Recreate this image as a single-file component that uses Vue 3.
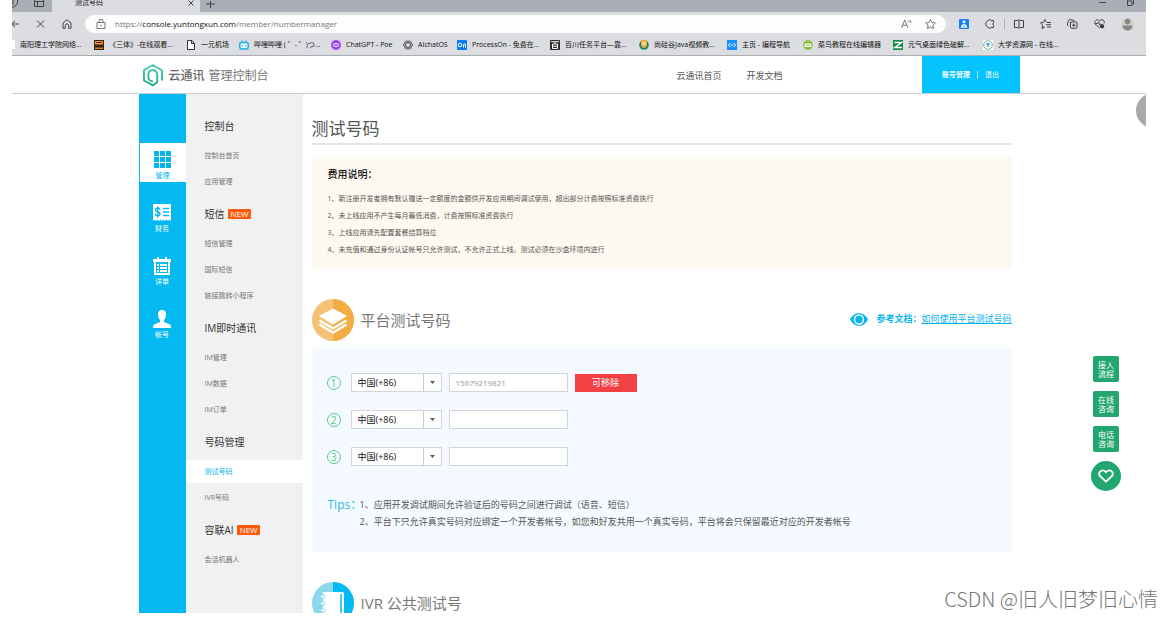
<script setup>
import { ref } from 'vue'

const url = 'https://'
const bookmarks = [
  { icon: 'none', text: '南阳理工学院网络...' },
  { icon: 'film', text: '《三体》-在线观看...' },
  { icon: 'page', text: '一元机场' },
  { icon: 'tv', text: '哔哩哔哩 ( ゜- ゜)つ...' },
  { icon: 'poe', text: 'ChatGPT - Poe' },
  { icon: 'ai', text: 'AIchatOS' },
  { icon: 'on', text: 'ProcessOn - 免费在...' },
  { icon: 'bai', text: '百川任务平台—靠...' },
  { icon: 'u', text: '尚硅谷Java视频教...' },
  { icon: 'code', text: '主页 - 编程导航' },
  { icon: 'bird', text: '菜鸟教程在线编辑器' },
  { icon: 'z', text: '元气桌面绿色破解...' },
  { icon: 'uni', text: '大学资源网 - 在线...' },
]

const rail = [
  { icon: 'grid', text: '管理', active: true },
  { icon: 'bill', text: '财务' },
  { icon: 'list', text: '详单' },
  { icon: 'user', text: '帐号' },
]

const groups = [
  { title: '控制台', items: ['控制台首页', '应用管理'] },
  { title: '短信', isNew: true, items: ['短信管理', '国际短信', '链接跳转小程序'] },
  { title: 'IM即时通讯', items: ['IM管理', 'IM数据', 'IM订单'] },
  { title: '号码管理', items: ['测试号码', 'IVR号码'] },
  { title: '容联AI', isNew: true, items: ['会话机器人'] },
]

const fees = [
  '1、新注册开发者拥有默认赠送一定额度的金额供开发应用期间调试使用，超出部分计费按照标准资费执行',
  '2、未上线应用不产生每月最低消费，计费按照标准资费执行',
  '3、上线应用请先配置套餐结算档位',
  '4、未充值和通过身份认证帐号只允许测试，不允许正式上线。测试必须在沙盒环境内进行',
]

const phones = ref(['15679219821', '', ''])
const helpers = [['接入', '流程'], ['在线', '咨询'], ['电话', '咨询']]
</script>

<template>
  <div class="frame">
    <div class="screen">
      <div class="tabs">
        <div class="tab-tools">
          <svg width="9" height="8" viewBox="0 0 9 8"><path d="M0 7h2.500L5.500 3V0M1 0v5" /></svg>
          <svg width="10" height="8" viewBox="0 0 10 8"><path d="M.5 0v6.500h9V0M.5 1.500h9M3.500 1.500v5" /></svg>
        </div>
        <div class="tab"><span>测试号码</span>
          <button class="plain" aria-label="关闭标签页"><svg width="6" height="6" viewBox="0 0 6 6"><path d="M.5.5l5 5M5.500.5l-5 5" /></svg></button>
        </div>
        <button class="plain add" aria-label="新建标签页"><svg width="9" height="8" viewBox="0 0 9 8"><path d="M4.500 0v7M0 3h9" /></svg></button>
        <div class="win">
          <svg width="7" height="8" viewBox="0 0 7 8"><path d="M0 2.500h7" /></svg>
          <svg width="7" height="8" viewBox="0 0 7 8"><path d="M.5 0v5.500h4.500V1H0M6.500 0v4.500" /></svg>
        </div>
      </div>

      <div class="toolbar">
        <div class="nav">
          <svg width="7" height="10" viewBox="0 0 7 10"><path d="M0 5h7M0 4.500L3 2M0 5.500L3 8" /></svg>
          <svg width="9" height="10" viewBox="0 0 9 10"><path d="M1 1.500l7 7M8 1.500l-7 7" /></svg>
          <svg width="10" height="10" viewBox="0 0 10 10"><path d="M1 4L5 .7 9 4v5.300H6.700V6.500a1.700 1.700 0 0 0-3.400 0v2.800H1z" /></svg>
        </div>
        <div class="address">
          <svg width="10" height="10" viewBox="0 0 10 10"><path d="M1 3.500h8v6H1zM3 3.500V2.300a2 2 0 0 1 4 0v1.200" /><circle cx="5" cy="6.500" r=".4" /></svg>
          <a href="#" class="url">{{ url }}<b>console.yuntongxun.com</b>/member/numbermanager</a>
          <svg width="11" height="10" viewBox="0 0 11 10"><path d="M.5 9L3.700 1 7 9M1.700 6.300h4M7 1.500q1 .8 1 2.200M8.500.7q1.500 1 1.500 3" /></svg>
          <svg width="11" height="10" viewBox="0 0 11 10"><path d="M5.500.5l1.500 3 3.300.5-2.400 2.200.6 3.300-3-1.600-3 1.600.6-3.300L.7 4 4 3.500z" /></svg>
        </div>
        <div class="tools">
          <svg width="10" height="10" viewBox="0 0 10 10"><rect width="10" height="10" rx="1" fill="#157efb" stroke="none" /><path d="M1.800 8.800c0-2 1.200-3.300 3.200-3.800 2 .5 3.200 1.800 3.200 3.800z" fill="#fff" stroke="none" /><circle cx="5" cy="2.800" r="1.500" fill="#fff" stroke="none" /><path d="M5 6.500v1.500" stroke="#157efb" /></svg>
          <svg width="10" height="10" viewBox="0 0 10 10"><path d="M3 1.500q2-2 3.200 0h2.300v2.200q-1.800 1.300 0 2.600v2.200H6.200q-1.200 1.500-3 0L.8 6.500V3.500z" /></svg>
          <i class="sep"></i>
          <svg width="10" height="10" viewBox="0 0 10 10"><path d="M4 1.500H.5v7H4M6 1.500h3.500v7H6M5 0v10" /></svg>
          <svg width="11" height="10" viewBox="0 0 11 10"><path d="M6.500 3.200L4.800.5 3.500 3.300.5 4l2.200 2L2 9.500l3-1.600M7 3.500h4M6 5.700h5M7 8h4" /></svg>
          <svg width="11" height="10" viewBox="0 0 11 10"><path d="M1.500 7Q0 6.500.5 5l1-3.500Q2 .2 3.500.6l4 1M3.500 3h5.300q1.200 0 1.200 1v4q0 1.300-1.200 1.300H4.700Q3.500 9.300 3.500 8zM5 6.200h3.500M6.800 4.500v3.400" /></svg>
          <svg width="11" height="10" viewBox="0 0 11 10"><path d="M5.500 9L1 4.800C-.5 2.500 3-1 5.500 2 8-1 11.500 2 10 4.500M1 4.500h2.500l1-1.500 1 3 1-1.500" /><circle cx="8" cy="7.200" r="1.800" fill="#333" /></svg>
          <svg width="13" height="13" viewBox="0 0 13 13"><circle cx="6.500" cy="6.500" r="6.500" fill="#d3cfcc" stroke="none" /><circle cx="6.500" cy="3.600" r="2.800" fill="#8b8580" stroke="none" /><path d="M1.800 7.500h9.400q.3 4.500-4.700 5-5-.5-4.700-5z" fill="#8b8580" stroke="none" /></svg>
        </div>
      </div>

      <nav class="bookmarks">
        <a v-for="b in bookmarks" :key="b.text" href="#">
          <i v-if="b.icon === 'none'" class="stub"></i>
          <svg v-else width="10" height="10" viewBox="0 0 10 10">
            <template v-if="b.icon === 'film'"><rect width="10" height="10" fill="#30231b" /><path d="M1 1h8v3.500H1z" fill="#ff9a21" /><path d="M2 2.500h6" stroke="#30231b" /><path d="M1 7.500h8v1.500H1z" fill="#e87910" /></template>
            <path v-if="b.icon === 'page'" d="M1.500.5h4.500l2.500 3v6h-7zM5.500.5v3h3" fill="#fff" stroke="#333" />
            <template v-if="b.icon === 'tv'"><rect x=".8" y="2.500" width="8.400" height="6.500" rx="1.500" fill="#e8f8ff" stroke="#1eaee5" stroke-width="1.500" /><path d="M2.500.3l1.500 2M7.500.3L6 2.300M3.300 5v1.500M6.700 5v1.500" stroke="#1eaee5" /></template>
            <template v-if="b.icon === 'poe'"><circle cx="5" cy="5" r="5" fill="#a247ef" /><rect x="2" y="3" width="6" height="4" rx="2" fill="#e8cbff" /><path d="M3 5h4" stroke="#7331d0" /></template>
            <g v-if="b.icon === 'ai'" fill="none" stroke="#444" stroke-width=".7"><ellipse cx="5" cy="5" rx="4.600" ry="2.300" /><ellipse cx="5" cy="5" rx="4.600" ry="2.300" transform="rotate(60 5 5)" /><ellipse cx="5" cy="5" rx="4.600" ry="2.300" transform="rotate(120 5 5)" /></g>
            <template v-if="b.icon === 'on'"><rect width="10" height="10" rx="1" fill="#0879f9" /><circle cx="3" cy="5" r="1.800" fill="none" stroke="#fff" /><path d="M6.500 7.500V4.500q2-1.500 2 .5v2.500" fill="none" stroke="#fff" /></template>
            <template v-if="b.icon === 'bai'"><rect width="10" height="10" rx="1" fill="#2d2b2b" /><path d="M1 1.700h8M5 2v1.500M2.500 4h5v4.500h-5zM2.500 6.200h5" fill="none" stroke="#fff" /></template>
            <template v-if="b.icon === 'u'"><circle cx="5" cy="5" r="4.800" fill="#0c8a70" /><path d="M2 0h6v5q-.5 3-3 3T2 5z" fill="#f5a52a" /><path d="M4 1.500v3q1 1.500 2 0v-3" fill="none" stroke="#fff" /></template>
            <template v-if="b.icon === 'code'"><rect width="10" height="10" fill="#1890ff" /><path d="M3.500 3l-2 2 2 2M6.500 3l2 2-2 2M4 5h2" fill="none" stroke="#fff" /></template>
            <template v-if="b.icon === 'bird'"><circle cx="5" cy="5" r="4.800" fill="#87bd37" /><rect x="1.500" y="3.500" width="7" height="3.500" rx="1.500" fill="#fff" /><path d="M3 5.300h4" stroke="#6c9f27" stroke-width=".8" /></template>
            <template v-if="b.icon === 'z'"><rect width="10" height="10" fill="#138b4b" /><path d="M1.500 2.500h7l-6.500 5h7" fill="none" stroke="#fff" stroke-width="1.500" /></template>
            <template v-if="b.icon === 'uni'"><rect width="10" height="10" fill="#fff" /><circle cx="5" cy="5" r="4.300" fill="none" stroke="#47a865" stroke-width=".8" /><path d="M2.800 3h4.400L5 7.500z" fill="#5aa7e8" /></template>
          </svg>
          <span>{{ b.text }}</span>
        </a>
      </nav>

      <header class="site-head">
        <div class="wrap head-row">
          <a href="#" class="logo">
            <svg width="22" height="24" viewBox="0 0 22 24"><defs><linearGradient id="lg" x2="0" y2="1"><stop stop-color="#4cd0b4" /><stop offset="1" stop-color="#1da886" /></linearGradient></defs><path d="M20 17.500V7.500L11 2 2 7v10.500l9 4.800 4.200-3V11Q14.500 7.500 11 7 6.800 7.500 6.300 11v3.500Q6.500 17.500 10.800 18.500" fill="none" stroke="url(#lg)" stroke-width="1.900" stroke-linejoin="round" /></svg>
            <strong>云通讯</strong><span>管理控制台</span>
          </a>
          <a href="#" class="top-link">云通讯首页</a>
          <a href="#" class="top-link">开发文档</a>
          <div class="account"><a href="#"><b>账号管理</b></a><i></i><a href="#">退出</a></div>
        </div>
      </header>

      <div class="wrap body">
        <nav class="rail">
          <a v-for="r in rail" :key="r.text" href="#" :class="{ active: r.active }">
            <svg width="18" height="18" viewBox="0 0 18 18" fill="currentColor">
              <path v-if="r.icon === 'grid'" d="M0 0h5v5H0zM6 0h5v5H6zM12 0h5v5h-5zM0 6h5v5H0zM6 6h5v5H6zM12 6h5v5h-5zM0 12h5v5H0zM6 12h5v5H6zM12 12h5v5h-5z" />
              <template v-if="r.icon === 'bill'"><path d="M0 0h18v17l-1.500-1.500L15 17l-1.500-1.500L12 17l-1.500-1.500L9 17l-1.500-1.500L6 17l-1.500-1.500L3 17l-1.500-1.500L0 17z" /><path d="M7 5.500Q6.500 4 4.700 4 2.500 4 2.500 5.800T4.700 8Q7 8.300 7 10t-2.300 1.800Q2.500 11.800 2 10M4.700 2.500v11M10 4.500h6M10 8h6M10 11.500h6" fill="none" stroke="#04b8f1" stroke-width="1.300" /></template>
              <template v-if="r.icon === 'list'"><path d="M0 2h18v3H0zM4 0h2v3H4zM12 0h2v3h-2z" /><path d="M2 5v12h14V5" fill="none" stroke="currentColor" stroke-width="2" /><path d="M4 7h2v2H4zM7 7h7v2H7zM4 10h2v2H4zM7 10h7v2H7zM4 13h2v2H4zM7 13h7v2H7z" /></template>
              <path v-if="r.icon === 'user'" d="M5 4Q5 0 9 0t4 4-2 6v2l6 2.500q1 .5 1 3.500H0q0-3 1-3.500L7 12v-2Q5 8 5 4z" />
            </svg>
            <span>{{ r.text }}</span>
          </a>
        </nav>

        <nav class="menu">
          <section v-for="g in groups" :key="g.title">
            <h2>{{ g.title }}<em v-if="g.isNew">NEW</em></h2>
            <ul>
              <li v-for="i in g.items" :key="i"><a href="#" :class="{ active: i === '测试号码' }">{{ i }}</a></li>
            </ul>
          </section>
        </nav>

        <main>
          <h1>测试号码</h1>
          <section class="fees">
            <h3>费用说明：</h3>
            <p v-for="f in fees" :key="f">{{ f }}</p>
          </section>

          <div class="section-head">
            <svg width="42" height="42" viewBox="0 0 42 42"><circle cx="21" cy="21" r="21" fill="#f5c172" /><path d="M21 0a21 21 0 0 1 0 42z" fill="#f3ad42" /><path d="M21 9.500l14 7.500-14 8.500L7 17z" fill="#fff" /><path d="M7.500 21.500L21 29.500l13.500-8M7.500 25.500L21 33.800l13.500-8.300" fill="none" stroke="#fff" stroke-width="2.200" /></svg>
            <h2>平台测试号码</h2>
            <div class="doc">
              <svg width="18" height="13" viewBox="0 0 18 13"><path d="M0 6.500Q3.500 0 9 0t9 6.500Q14.500 13 9 13T0 6.500z" fill="#04b4ee" /><circle cx="9" cy="6.500" r="4.500" fill="none" stroke="#fff" stroke-width="1.400" /></svg>
              <b>参考文档：</b><a href="#">如何使用平台测试号码</a>
            </div>
          </div>

          <section class="panel">
            <div v-for="(p, n) in phones" :key="n" class="phone-row">
              <span class="num">{{ n + 1 }}</span>
              <div class="country">
                <select :aria-label="'国家 ' + (n + 1)"><option>中国(+86)</option></select>
                <svg width="5" height="3" viewBox="0 0 5 3"><path d="M0 0h5L2.500 3z" fill="#555" /></svg>
              </div>
              <input v-model="phones[n]" type="text" :aria-label="'测试号码 ' + (n + 1)" />
              <button v-if="n === 0" class="remove">可移除</button>
            </div>
            <div class="tips">
              <span>Tips：</span>
              <div>
                <p>1、应用开发调试期间允许验证后的号码之间进行调试（语音、短信）</p>
                <p>2、平台下只允许真实号码对应绑定一个开发者帐号，如您和好友共用一个真实号码，平台将会只保留最近对应的开发者帐号</p>
              </div>
            </div>
          </section>

          <div class="section-head">
            <svg width="42" height="42" viewBox="0 0 42 42"><circle cx="21" cy="21" r="21" fill="#8bd7ee" /><path d="M21 0a21 21 0 0 1 0 42z" fill="#04b8f1" /><path d="M11 10h19q2 0 2 2v22H11z" fill="#fff" /><path d="M29 12v22" stroke="#04b8f1" stroke-width="1.500" /><g fill="#fff" stroke="#8bd7ee" stroke-width="1"><rect x="8.500" y="13" width="4.500" height="3" rx="1.500" /><rect x="8.500" y="20" width="4.500" height="3" rx="1.500" /><rect x="8.500" y="27" width="4.500" height="3" rx="1.500" /></g></svg>
            <h2>IVR 公共测试号</h2>
          </div>
        </main>
      </div>

      <i class="bubble"></i>
      <aside class="helpers">
        <button v-for="h in helpers" :key="h[0]">{{ h[0] }}<br />{{ h[1] }}</button>
        <button class="heart" aria-label="收藏"><svg width="16" height="14" viewBox="0 0 16 14"><path d="M8 12.700L2 7C-.5 3.500 4-1 8 3.200 12-1 16.500 3.500 14 7z" fill="none" stroke="#fff" stroke-width="1.800" stroke-linejoin="round" /></svg></button>
      </aside>
    </div>
    <div class="mark">CSDN @旧人旧梦旧心情</div>
  </div>
</template>

<style>
body { background: #fff; }
</style>

<style scoped>
* { box-sizing: border-box; margin: 0; padding: 0; }
.frame { position: relative; height: 100vh; padding: 0 27px 6px 12px; overflow: hidden; font-family: "Open Sans", "Noto Sans CJK SC", sans-serif; font-size: 9px; color: #555; }
.screen { position: relative; height: 100%; overflow: hidden; display: flex; flex-direction: column; }
a { color: inherit; text-decoration: none; white-space: nowrap; }
button { border: 0; font-family: inherit; cursor: pointer; }
svg { flex: none; display: block; }
ul { list-style: none; }

.tabs { flex: none; height: 12px; background: #a9aeb7; display: flex; align-items: flex-start; color: #222; }
.tabs svg, .nav svg, .address svg, .tools svg { fill: none; stroke: #444; stroke-width: 1; }
.tab-tools { width: 40px; display: flex; gap: 13px; }
.tab { width: 148px; height: 12px; background: #dcdde1; padding: 0 6px 0 23px; display: flex; justify-content: space-between; }
.tab span { font-size: 7px; line-height: 6px; }
.plain { background: none; height: 6px; line-height: 0; }
.add { height: 9px; margin-left: 6px; }
.win { margin-left: auto; padding-right: 12px; display: flex; gap: 21px; }

.toolbar { flex: none; height: 22px; padding-top: 2px; background: #dcdde1; display: flex; align-items: center; }
.nav { width: 73px; display: flex; gap: 17px; }
.address { flex: 1; height: 18px; border-radius: 9px; background: #fdfdfd; display: flex; align-items: center; padding: 0 10px 0 11px; gap: 13px; }
.address svg { stroke: #777; }
.url { flex: 1; font-size: 8px; line-height: 12px; color: #777; margin-left: -4px; }
.url b { font-weight: 400; color: #111; }
.tools { display: flex; align-items: center; gap: 16px; padding: 0 12px 0 13px; }
.sep { width: 1px; height: 10px; background: #b0b0b4; margin: 0 -7px; }

.bookmarks { flex: none; height: 22px; background: #dcdde1; border-bottom: 1px solid #aaacb0; display: grid; grid-template-columns: 82px 92px 53px 92px 72px 54px 93px 89px 88px 76px 90px 90px 1fr; align-items: center; font-size: 7px; line-height: 12px; color: #111; }
.bookmarks a { display: flex; align-items: center; gap: 5px; }
.stub { width: 3px; height: 9px; background: #fff; }

.wrap { width: 78%; max-width: 881px; margin: 0 auto; }
.site-head { flex: none; border-bottom: 1px solid #ccc; }
.head-row { display: flex; align-items: center; height: 37px; }
.logo { display: flex; align-items: center; margin: 0 auto 0 3px; color: #777; font-size: 12px; line-height: 20px; }
.logo strong { margin: 0 4px 0 5px; color: #666; font-weight: 500; }
.logo strong, .logo span { padding-top: 2px; }
.top-link { margin-right: 25px; padding-top: 3px; line-height: 14px; }
.account { margin-left: 114px; width: 98px; height: 37px; background: #04c3ff; color: #fff; font-size: 7px; line-height: 14px; display: flex; align-items: center; justify-content: center; gap: 7px; }
.account i { width: 1px; height: 8px; background: #9be6ff; }

.body { flex: 1; min-height: 0; display: flex; }
.rail { width: 47px; flex: none; background: #04b8f1; padding-top: 49px; display: flex; flex-direction: column; gap: 14px; }
.rail a { color: #fff; height: 39px; padding-top: 8px; display: flex; flex-direction: column; align-items: center; font-size: 7px; line-height: 14px; }
.rail a.active { background: #fff; color: #04b4ee; margin-left: 1px; }
.menu { width: 117px; flex: none; background: #f1f1f1; padding-top: 11px; }
.menu h2 { display: flex; align-items: center; gap: 3px; height: 39px; padding: 11px 0 8px 19px; font-size: 10px; line-height: 20px; font-weight: 400; color: #333; }
.menu em { font-style: normal; font-size: 8px; line-height: 10px; padding: 0 3px; background: #ff5a0c; color: #fff; border-radius: 1px; }
.menu ul { display: flex; flex-direction: column; gap: 3px; }
.menu li a { display: block; height: 23px; padding-left: 19px; font-size: 7px; line-height: 23px; color: #777; }
.menu li a.active { background: #fff; color: #04b4ee; }

main { flex: 1; min-width: 0; padding: 22px 8px 0 9px; }
h1 { font-size: 17px; line-height: 26px; height: 29px; margin-bottom: 12px; font-weight: 400; color: #555; border-bottom: 2px solid #e5e5e5; }
.fees { background: #fef9f0; padding: 7px 16px 11px; }
.fees h3 { font-size: 10px; line-height: 20px; font-weight: 500; color: #111; margin-bottom: 6px; }
.fees p { font-size: 7px; line-height: 17px; white-space: nowrap; }
.section-head { margin: 30px 0 7px; height: 42px; display: flex; align-items: center; gap: 7px; }
.section-head h2 { font-size: 15px; line-height: 22px; font-weight: 400; color: #777; }
.doc { margin-left: auto; display: flex; align-items: center; color: #04b4ee; font-size: 9px; line-height: 14px; height: 40px; align-self: flex-start; }
.doc b { margin-left: 8px; }
.doc a { text-decoration: underline; }
.panel { background: #f4faff; padding: 25px 16px 22px 15px; }
.phone-row { display: flex; height: 19px; align-items: center; margin-bottom: 18px; }
.num { width: 14px; height: 14px; border: 1px solid #53cd8c; border-radius: 50%; color: #53cd8c; font-size: 10px; line-height: 12px; text-align: center; }
.country { position: relative; width: 91px; height: 19px; margin: 0 7px 0 10px; }
.country::before { content: ""; position: absolute; right: 18px; top: 1px; bottom: 1px; width: 1px; background: #ccc; }
.country svg { position: absolute; right: 7px; top: 8px; pointer-events: none; }
select, input { font-family: inherit; border: 1px solid #d3d6d9; background: #fff; border-radius: 0; height: 19px; padding: 0 6px; }
select { appearance: none; width: 100%; font-size: 9px; color: #111; }
input { width: 119px; font-size: 8px; color: #999; }
.remove { margin-left: 7px; width: 62px; height: 18px; background: #f24044; color: #fff; font-size: 9px; line-height: 18px; }
.tips { display: flex; margin-top: 30px; padding-left: 1px; font-size: 9px; line-height: 17px; white-space: nowrap; }
.tips span { width: 32px; font-size: 12px; color: #1fb9ea; }

.bubble { position: absolute; top: 93px; right: -25px; width: 35px; height: 35px; border-radius: 50%; background: #a9a9a9; }
.helpers { position: absolute; top: 356px; right: 25px; width: 30px; display: flex; flex-direction: column; align-items: center; gap: 9px; }
.helpers button { width: 26px; height: 26px; border-radius: 2px; background: #22a670; color: #fff; font-size: 8px; line-height: 9px; }
.helpers .heart { width: 30px; height: 30px; border-radius: 50%; display: flex; align-items: center; justify-content: center; }
.mark { position: absolute; right: 15px; bottom: 6px; font-size: 20px; line-height: 28px; font-weight: 300; font-family: "Noto Sans CJK SC", sans-serif; color: #777; white-space: nowrap; }
</style>
